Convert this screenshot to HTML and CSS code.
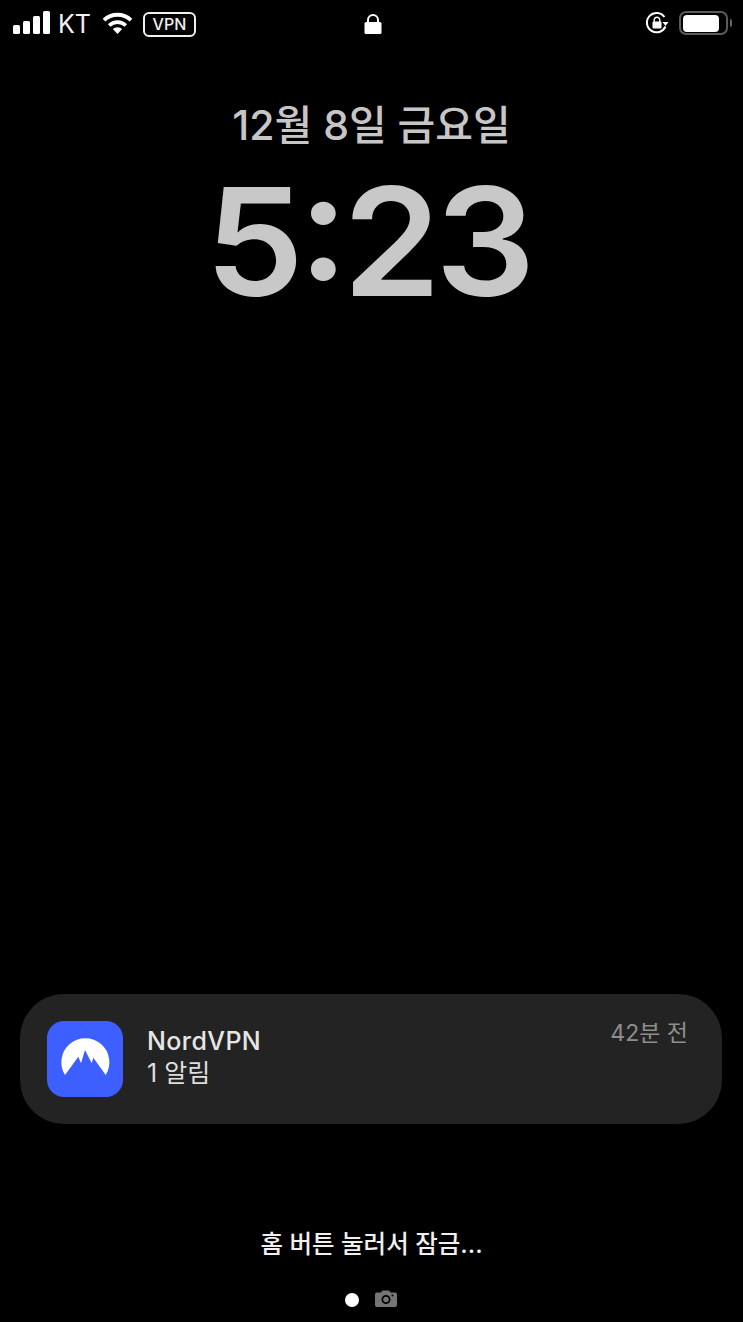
FILE: index.html
```html
<!DOCTYPE html>
<html lang="ko">
<head>
<meta charset="utf-8">
<title>Lock screen</title>
<link rel="stylesheet" href="styles.css">
</head>
<body>
<div class="screen">
  <header class="status">
    <div class="status-left">
      <div class="signal"><i class="b1"></i><i class="b2"></i><i class="b3"></i><i class="b4"></i></div>
      <span class="carrier">KT</span>
      <svg class="wifi" width="33" height="24" viewBox="0 0 33 24"><path d="M16.500 23 L11.800 18.100 A7 7 0 0 1 21.200 18.100 Z" fill="#fff"/><path d="M8.200 14.500 A12 12 0 0 1 24.800 14.500" fill="none" stroke="#fff" stroke-width="3.600"/><path d="M3 9.200 A19.500 19.500 0 0 1 30 9.200" fill="none" stroke="#fff" stroke-width="3.800"/></svg>
      <span class="vpn">VPN</span>
    </div>
    <svg class="lock" width="18" height="22" viewBox="0 0 18 22"><path d="M4 10 V7 A5 5 0 0 1 14 7 V10" fill="none" stroke="#fff" stroke-width="2"/><rect x="0.500" y="9" width="17" height="12" rx="1.500" fill="#fff"/></svg>
    <div class="status-right">
      <svg class="rotation" width="26" height="26" viewBox="0 0 26 26"><path d="M21.500 16.500 A9.700 9.700 0 1 1 20.500 7" fill="none" stroke="#fff" stroke-width="2"/><path d="M18.500 12 H24.500 L21.500 16 Z" fill="#fff"/><path d="M10.200 12 V10 A2.800 2.800 0 0 1 15.800 10 V12" fill="none" stroke="#fff" stroke-width="1.400"/><rect x="8.500" y="11.500" width="9" height="7" rx="1" fill="#fff"/></svg>
      <div class="battery"><div class="battery-shell"><div class="battery-fill"></div></div><div class="battery-cap"></div></div>
    </div>
  </header>

  <section class="clock">
    <div class="date">12월 8일 금요일</div>
    <div class="time">5:23</div>
  </section>

  <section class="notice">
    <svg class="app-icon" width="76" height="76" viewBox="0 0 76 76"><rect width="76" height="76" rx="17" fill="#3e5fff"/><path d="M18 54 A24 24 0 1 1 58.700 54 L46.300 36.700 L44.700 42.300 L38 29 L34 42.300 L31.300 35.700 Z" fill="#fff"/></svg>
    <div class="notice-text">
      <div class="app-name">NordVPN</div>
      <div class="app-count">1 알림</div>
    </div>
    <div class="notice-time">42분 전</div>
  </section>

  <div class="hint">홈 버튼 눌러서 잠금...</div>

  <div class="pager">
    <span class="dot"></span>
    <svg class="camera" width="24" height="18" viewBox="0 0 24 18"><path fill-rule="evenodd" fill="#757575" d="M3 2.500 H7 L8.500 0.500 H15 L16.500 2.500 H21 A2 2 0 0 1 23 4.500 V15 A2 2 0 0 1 21 17 H3 A2 2 0 0 1 1 15 V4.500 A2 2 0 0 1 3 2.500 Z M12 5 A4.500 4.500 0 1 0 12 14 A4.500 4.500 0 1 0 12 5 Z M12 6.700 A2.800 2.800 0 1 1 12 12.300 A2.800 2.800 0 1 1 12 6.700 Z M18.500 4.500 A1 1 0 1 0 18.500 6.500 A1 1 0 1 0 18.500 4.500 Z"/></svg>
  </div>
</div>
</body>
</html>
```
FILE: styles.css
```css
* { box-sizing: border-box; }
html, body { margin: 0; padding: 0; background: #000; }
.screen {
  width: 743px;
  height: 1322px;
  overflow: hidden;
  background: #000;
  display: flex;
  flex-direction: column;
  font-family: Inter, "Noto Sans CJK KR", sans-serif;
}
.status {
  height: 48px;
  padding: 0 11px 0 13px;
  display: grid;
  grid-template-columns: 1fr auto 1fr;
  align-items: center;
  color: #fff;
}
.status-left { display: flex; align-items: center; }
.signal { display: flex; align-items: flex-end; gap: 3px; height: 23px; margin-bottom: 3px; }
.signal i { display: block; width: 7px; background: #fff; border-radius: 1.500px; }
.signal .b1 { height: 9px; }
.signal .b2 { height: 13px; }
.signal .b3 { height: 18px; }
.signal .b4 { height: 23px; }
.carrier { margin-left: 8px; font-size: 25px; line-height: 28px; color: #f2f2f2; }
.wifi { margin-left: 10px; margin-bottom: 3px; }
.vpn {
  margin-left: 9px;
  width: 53px;
  height: 25px;
  border: 2px solid #f0f0f0;
  border-radius: 6px;
  font-size: 16px;
  font-weight: 500;
  line-height: 21px;
  text-align: center;
  color: #f0f0f0;
}
.lock { display: block; }
.status-right { display: flex; align-items: center; justify-content: flex-end; gap: 9px; margin-bottom: 2px; }
.battery { display: flex; align-items: center; gap: 2px; }
.battery-shell {
  width: 49px;
  height: 24px;
  border: 2px solid #5c5c5c;
  border-radius: 7px;
  padding: 1.500px 2px;
}
.battery-fill { width: 36px; height: 17px; background: #fff; border-radius: 4px; }
.battery-cap { width: 2px; height: 8px; background: #666; border-radius: 0 3px 3px 0; }
.clock { display: flex; flex-direction: column; align-items: center; }
.date {
  margin-top: 50px;
  font-size: 41px;
  line-height: 54px;
  font-weight: 500;
  color: #c6c6c6;
}
.time {
  margin-top: 15px;
  padding-right: 8px;
  font-size: 150px;
  line-height: 150px;
  font-weight: 600;
  letter-spacing: -5.500px;
  font-feature-settings: "calt" 1;
  transform: scaleX(1.05);
  color: #c8c8c8;
}
.notice {
  margin: auto 21px 0 20px;
  height: 130px;
  border-radius: 44px;
  background: #232323;
  display: flex;
  align-items: flex-start;
  padding: 27px 34px 0 27px;
}
.app-icon { display: block; flex: none; }
.notice-text { margin-left: 24px; flex: 1; padding-top: 3px; }
.app-name { font-size: 25px; line-height: 34px; font-weight: 500; letter-spacing: 0.4px; color: #e6e6e6; }
.app-count { font-size: 25px; line-height: 30px; color: #dedede; }
.notice-time { font-size: 23px; line-height: 24px; color: #8e8e8e; }
.hint {
  margin-top: 103px;
  text-align: center;
  font-size: 24.500px;
  line-height: 34px;
  font-weight: 500;
  color: #f0f0f0;
}
.pager {
  margin-top: 25px;
  height: 28px;
  display: flex;
  align-items: center;
  justify-content: center;
  gap: 15px;
  margin-bottom: 8px;
}
.dot { width: 14px; height: 14px; border-radius: 50%; background: #fff; }
.camera { display: block; margin-bottom: 2px; }
```
